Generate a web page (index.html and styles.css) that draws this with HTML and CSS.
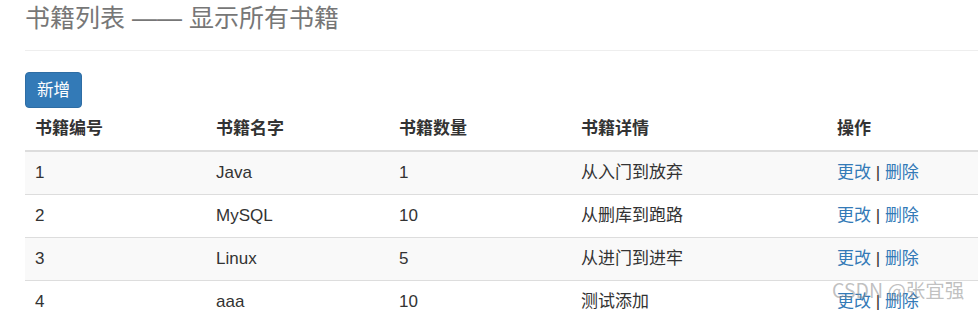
FILE: index.html
```html
<!DOCTYPE html>
<html lang="zh-CN">
<head>
<meta charset="utf-8">
<title>书籍列表</title>
<link rel="stylesheet" href="styles.css">
</head>
<body>
<div class="page">
  <div class="page-header">
    <h1 class="title">书籍列表 —— 显示所有书籍</h1>
  </div>
  <div class="toolbar">
    <a class="btn" href="#">新增</a>
  </div>
  <table class="books">
    <colgroup>
      <col class="c1"><col class="c2"><col class="c3"><col class="c4"><col class="c5">
    </colgroup>
    <thead>
      <tr><th>书籍编号</th><th>书籍名字</th><th>书籍数量</th><th>书籍详情</th><th>操作</th></tr>
    </thead>
    <tbody>
      <tr><td>1</td><td>Java</td><td>1</td><td>从入门到放弃</td><td><a href="#">更改</a> | <a href="#">删除</a></td></tr>
      <tr><td>2</td><td>MySQL</td><td>10</td><td>从删库到跑路</td><td><a href="#">更改</a> | <a href="#">删除</a></td></tr>
      <tr><td>3</td><td>Linux</td><td>5</td><td>从进门到进牢</td><td><a href="#">更改</a> | <a href="#">删除</a></td></tr>
      <tr><td>4</td><td>aaa</td><td>10</td><td>测试添加</td><td><a href="#">更改</a> | <a href="#">删除</a></td></tr>
    </tbody>
  </table>
</div>
<div class="watermark">CSDN @张宜强</div>
</body>
</html>
```

FILE: styles.css
```css
html, body {
  margin: 0;
  padding: 0;
  overflow: hidden;
  background: #fff;
}
body {
  font-family: "Liberation Sans", "Noto Sans CJK SC", sans-serif;
  font-size: 17px;
  color: #333;
}
.page {
  padding-left: 25px;
  width: 1100px;
}
.page-header {
  border-bottom: 1px solid #eee;
  height: 50px;
}
.title {
  margin: 0;
  padding-top: 3px;
  font-size: 25px;
  line-height: 30px;
  font-weight: normal;
  color: #777;
}
.toolbar {
  padding-top: 21px;
  display: flex;
}
.btn {
  display: block;
  width: 57px;
  height: 36px;
  line-height: 34px;
  text-align: center;
  background: #337ab7;
  border: 1px solid #2e6da4;
  box-sizing: border-box;
  border-radius: 4px;
  color: #fff;
  text-decoration: none;
  font-size: 16.5px;
}
.books {
  border-collapse: collapse;
  border-spacing: 0;
  width: 1000px;
  table-layout: fixed;
}
.c1 { width: 181px; }
.c2 { width: 183px; }
.c3 { width: 182px; }
.c4 { width: 256px; }
.books th, .books td {
  text-align: left;
  padding: 9px 10px;
  line-height: 24px;
  height: 24px;
}
.books th {
  font-weight: bold;
  border-bottom: 2px solid #ddd;
}
.books td {
  border-top: 1px solid #ddd;
}
.books tbody tr:first-child td {
  border-top: 0;
}
.books tbody tr:nth-child(odd) {
  background: #f9f9f9;
}
.books a {
  color: #337ab7;
  text-decoration: none;
}
.watermark {
  position: absolute;
  left: 832px;
  top: 277px;
  font-family: "Noto Sans CJK SC", sans-serif;
  font-size: 19.5px;
  line-height: 26px;
  color: rgba(140, 140, 140, 0.55);
}
```
